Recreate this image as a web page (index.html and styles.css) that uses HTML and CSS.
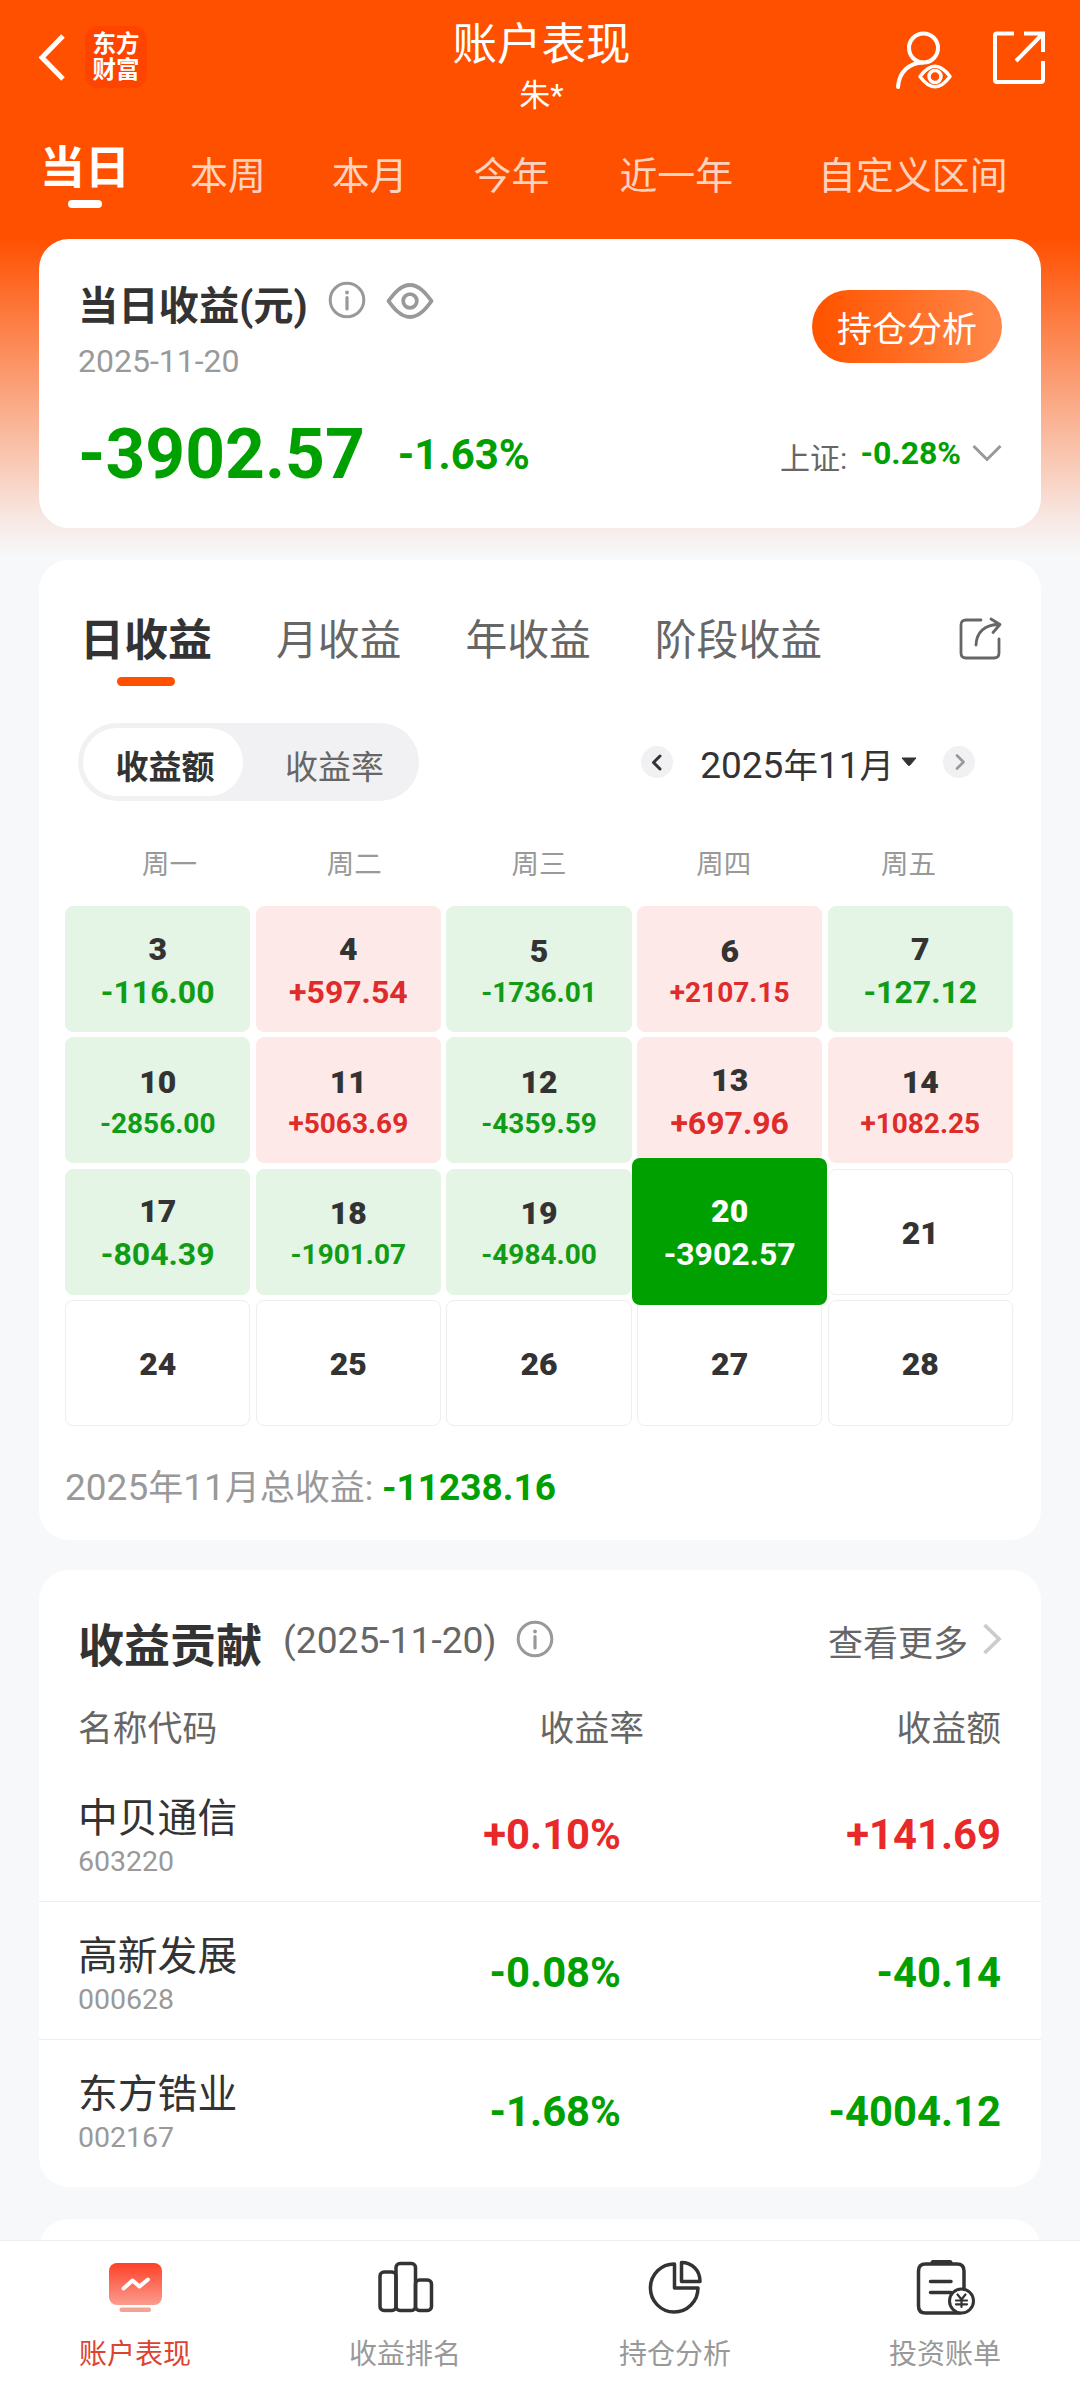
FILE: index.html
```html
<!DOCTYPE html>
<html lang="zh-CN">
<head>
    <meta charset="UTF-8">
    <meta name="viewport" content="width=device-width, initial-scale=1.0">
    <title>账户表现</title>
    <link rel="stylesheet" href="styles.css">
</head>
<body>
<header class="topbar">
    <div class="topbar-left">
        <svg class="back" width="30" height="50" viewBox="0 0 30 50"><path d="M26 4L5 25.500L26 47" fill="none" stroke="#fff" stroke-width="5"/></svg>
        <div class="logo"><span>东方</span><span>财富</span></div>
    </div>
    <div class="topbar-title">
        <h1>账户表现</h1>
        <p>朱*</p>
    </div>
    <div class="topbar-right">
        <svg width="60" height="62" viewBox="0 0 60 62" fill="none" stroke="#fff" stroke-width="4" stroke-linecap="round">
            <circle cx="29.500" cy="18" r="14.500"/>
            <path d="M4 57C5 42 15 33 29 32.500"/>
            <path d="M26 46.500Q41 26 56 46.500Q41 67 26 46.500Z" stroke-width="3.500" stroke-linejoin="round"/>
            <circle cx="41" cy="46.500" r="6" stroke-width="3.500"/>
        </svg>
        <svg width="54" height="54" viewBox="0 0 54 54" fill="none" stroke="#fff" stroke-width="4">
            <path d="M22 3.500H5Q3 3.500 3 5.500V50Q3 52 5 52H49Q51 52 51 50V31"/>
            <path d="M32 3.500H51V22M51 3.500L24 31"/>
        </svg>
    </div>
</header>

<nav class="periods">
    <a class="active">当日</a>
    <a>本周</a>
    <a>本月</a>
    <a>今年</a>
    <a>近一年</a>
    <a>自定义区间</a>
</nav>

<main>
    <section class="card today">
        <div class="today-head">
            <div>
                <div class="today-title">
                    <h2>当日收益(元)</h2>
                    <svg class="info" width="38" height="38" viewBox="0 0 38 38"><circle cx="19" cy="19" r="16.800" fill="none" stroke="#999" stroke-width="3"/><circle cx="19" cy="11.500" r="1.900" fill="#999"/><path d="M19 16.500V28" stroke="#999" stroke-width="3.200" stroke-linecap="round"/></svg>
                    <svg class="eye" width="48" height="38" viewBox="0 0 48 38" fill="none" stroke="#999" stroke-width="3.800"><path d="M2.500 19C7 13 14 3 24 3S41 13 45.500 19C41 25 34 35 24 35S7 25 2.500 19Z" stroke-linejoin="round"/><circle cx="24" cy="19" r="6.800"/></svg>
                </div>
                <p class="today-date">2025-11-20</p>
            </div>
            <button class="analyse">持仓分析</button>
        </div>
        <div class="today-value">
            <strong class="amount down">-3902.57</strong>
            <strong class="rate down">-1.63%</strong>
            <span class="index-name">上证:</span>
            <strong class="index-rate down">-0.28%</strong>
            <svg width="30" height="18" viewBox="0 0 30 18"><path d="M1.500 1L15 14.500L28.500 1" fill="none" stroke="#999" stroke-width="3"/></svg>
        </div>
    </section>

    <section class="card calendar">
        <div class="tabs">
            <a class="active">日收益</a>
            <a>月收益</a>
            <a>年收益</a>
            <a>阶段收益</a>
            <svg width="44" height="44" viewBox="0 0 44 44" fill="none" stroke="#666" stroke-width="2.800" stroke-linecap="round" stroke-linejoin="round">
                <path d="M23 3H8Q3 3 3 8V36Q3 41 8 41H36Q41 41 41 36V22"/>
                <path d="M18 28C18.500 15 27 7.500 41 7.500M33 2L42 7.500L35 15.500"/>
            </svg>
        </div>

        <div class="filters">
            <div class="switch">
                <span class="on">收益额</span>
                <span>收益率</span>
            </div>
            <div class="month">
                <svg width="32" height="32" viewBox="0 0 32 32"><circle cx="16" cy="16" r="16" fill="#f1f1f3"/><path d="M19 10L12.500 16.500L19 23" fill="none" stroke="#333" stroke-width="3" stroke-linecap="round" stroke-linejoin="round"/></svg>
                <span class="month-text"><b>2025</b>年<b>11</b>月</span>
                <svg class="caret" width="16" height="10" viewBox="0 0 16 10"><path d="M1 1H15L8.800 8.200Q8 9 7.200 8.200Z" fill="#333" stroke="#333" stroke-linejoin="round"/></svg>
                <svg width="32" height="32" viewBox="0 0 32 32"><circle cx="16" cy="16" r="16" fill="#f1f1f3"/><path d="M14 9.500L20.500 16L14 22.500" fill="none" stroke="#999" stroke-width="2.600" stroke-linecap="round" stroke-linejoin="round"/></svg>
            </div>
        </div>

        <div class="weekdays">
            <span>周一</span><span>周二</span><span>周三</span><span>周四</span><span>周五</span>
        </div>

        <div class="days">
            <div class="day loss"><b>3</b><em>-116.00</em></div>
            <div class="day gain"><b>4</b><em>+597.54</em></div>
            <div class="day loss"><b>5</b><em class="small">-1736.01</em></div>
            <div class="day gain"><b>6</b><em class="small">+2107.15</em></div>
            <div class="day loss"><b>7</b><em>-127.12</em></div>

            <div class="day loss"><b>10</b><em class="small">-2856.00</em></div>
            <div class="day gain"><b>11</b><em class="small">+5063.69</em></div>
            <div class="day loss"><b>12</b><em class="small">-4359.59</em></div>
            <div class="day gain"><b>13</b><em>+697.96</em></div>
            <div class="day gain"><b>14</b><em class="small">+1082.25</em></div>

            <div class="day loss"><b>17</b><em>-804.39</em></div>
            <div class="day loss"><b>18</b><em class="small">-1901.07</em></div>
            <div class="day loss"><b>19</b><em class="small">-4984.00</em></div>
            <div class="day selected"><b>20</b><em>-3902.57</em></div>
            <div class="day"><b>21</b></div>

            <div class="day"><b>24</b></div>
            <div class="day"><b>25</b></div>
            <div class="day"><b>26</b></div>
            <div class="day"><b>27</b></div>
            <div class="day"><b>28</b></div>
        </div>

        <p class="total"><b>2025</b>年<b>11</b>月总收益: <strong class="down">-11238.16</strong></p>
    </section>

    <section class="card contribution">
        <div class="contribution-head">
            <h2>收益贡献</h2>
            <span class="date">(2025-11-20)</span>
            <svg class="info" width="38" height="38" viewBox="0 0 38 38"><circle cx="19" cy="19" r="16.800" fill="none" stroke="#999" stroke-width="3"/><circle cx="19" cy="11.500" r="1.900" fill="#999"/><path d="M19 16.500V28" stroke="#999" stroke-width="3.200" stroke-linecap="round"/></svg>
            <a class="more">查看更多</a>
            <svg class="arrow" width="20" height="32" viewBox="0 0 20 32"><path d="M2.500 2L17 16L2.500 30" fill="none" stroke="#ccc" stroke-width="3.800"/></svg>
        </div>
        <div class="row row-head">
            <span>名称代码</span>
            <span class="col-rate">收益率</span>
            <span>收益额</span>
        </div>
        <div class="row">
            <div class="stock"><span>中贝通信</span><small>603220</small></div>
            <strong class="up">+0.10%</strong>
            <strong class="up">+141.69</strong>
        </div>
        <div class="row">
            <div class="stock"><span>高新发展</span><small>000628</small></div>
            <strong class="down">-0.08%</strong>
            <strong class="down">-40.14</strong>
        </div>
        <div class="row">
            <div class="stock"><span>东方锆业</span><small>002167</small></div>
            <strong class="down">-1.68%</strong>
            <strong class="down">-4004.12</strong>
        </div>
    </section>

    <section class="card next"></section>
</main>

<nav class="bottom">
    <a class="active">
        <svg width="60" height="60" viewBox="0 0 60 60">
            <defs><linearGradient id="screen" x1="0" y1="0" x2="0" y2="1"><stop offset="0" stop-color="#ff4028"/><stop offset="1" stop-color="#fb9c8e"/></linearGradient></defs>
            <rect x="4" y="6" width="53" height="42" rx="8" fill="url(#screen)"/>
            <rect x="14.500" y="50.500" width="31.500" height="4.500" rx="2" fill="#f3a396"/>
            <path d="M18.500 31.500L27.500 23.500L34.500 29.500L43 22.500" fill="none" stroke="#fff" stroke-width="4" stroke-linecap="round" stroke-linejoin="round"/>
        </svg>
        <span>账户表现</span>
    </a>
    <a>
        <svg width="60" height="60" viewBox="0 0 60 60" fill="none" stroke="#333" stroke-width="3.500">
            <rect x="5" y="15" width="16" height="38.500" rx="4"/>
            <rect x="21" y="6.500" width="19.500" height="47" rx="4"/>
            <rect x="40.500" y="23" width="16" height="30.500" rx="4"/>
        </svg>
        <span>收益排名</span>
    </a>
    <a>
        <svg width="60" height="60" viewBox="0 0 60 60" fill="none" stroke="#333" stroke-width="3.500" stroke-linejoin="round">
            <path d="M29.500 7A23.800 24 0 1 0 53 31H29.500Z"/>
            <path d="M36.500 5.500V24.500H55C55 13 47 5.500 36.500 5.500Z"/>
        </svg>
        <span>持仓分析</span>
    </a>
    <a>
        <svg width="60" height="60" viewBox="0 0 60 60" fill="none" stroke="#333" stroke-width="3.500" stroke-linecap="round">
            <path d="M49 33V14Q49 7 42 7H10.500Q3.500 7 3.500 14V49Q3.500 56 10.500 56H45"/>
            <path d="M18 5.500H35" stroke-width="5"/>
            <path d="M15.500 24.500H36M15.500 35.500H36"/>
            <circle cx="46.500" cy="44" r="12" fill="#fff" stroke-width="3"/>
            <path d="M42.500 37.500L46.500 42.500L50.500 37.500M46.500 42.500V50M41 43.500H52M41 47.300H52" stroke-width="2.200"/>
        </svg>
        <span>投资账单</span>
    </a>
</nav>
</body>
</html>
```
FILE: styles.css
```css
* {
    box-sizing: border-box;
}
body {
    margin: 0;
    height: 2386px;
    overflow: hidden;
    font-family: Roboto, "Noto Sans CJK SC", sans-serif;
    color: #333;
    background: #f7f8fa linear-gradient(#ff5000 238px, #f7ebe8 525px, #f7f8fa 556px) no-repeat;
}
h1, h2, p {
    margin: 0;
    font-weight: 400;
}
svg {
    display: block;
    flex: none;
}
em {
    font-style: normal;
}
.down {
    color: #00a000;
}
.up {
    color: #e92929;
}

/* header */
.topbar {
    display: grid;
    grid-template-columns: 1fr auto 1fr;
    height: 128px;
    padding: 0 34px 0 37px;
    color: #fff;
}
.topbar-left {
    display: flex;
    align-items: flex-start;
    gap: 18px;
    padding-top: 26px;
}
.back {
    margin-top: 6px;
}
.logo {
    display: flex;
    flex-direction: column;
    justify-content: center;
    align-items: center;
    width: 62px;
    height: 62px;
    border-radius: 13px;
    background: #ff4400;
    font-size: 23.5px;
    font-weight: 700;
    line-height: 26px;
}
.topbar-title {
    padding-top: 14px;
    text-align: center;
}
.topbar-title h1 {
    font-size: 44.5px;
    line-height: 62px;
}
.topbar-title p {
    font-size: 31px;
    line-height: 40px;
}
.topbar-right {
    display: flex;
    justify-content: flex-end;
    gap: 38px;
    padding-top: 30px;
}
.periods {
    display: flex;
    align-items: flex-start;
    height: 111px;
    padding: 18px 0 0 40px;
    font-size: 37.9px;
    line-height: 60px;
    color: rgba(255, 255, 255, 0.76);
}
.periods a {
    margin: 0 0 0 66px;
}
.periods a:nth-child(2) {
    margin-left: 60px;
}
.periods a:nth-child(5) {
    margin-left: 70px;
}
.periods a:nth-child(6) {
    margin-left: 85px;
}
.periods .active {
    margin: -7px 0 0;
    font-size: 45px;
    font-weight: 700;
    color: #fff;
}
.periods .active::after {
    content: "";
    display: block;
    width: 34px;
    height: 8px;
    margin: 1px auto 0;
    border-radius: 4px;
    background: #fff;
}

main {
    display: flex;
    flex-direction: column;
    gap: 32px;
    padding: 0 39px;
}
.card {
    flex: none;
    border-radius: 30px;
    background: #fff;
}

/* today's profit */
.today {
    height: 289px;
    padding: 39px 39px 0;
}
.today-head {
    display: flex;
    justify-content: space-between;
    height: 126px;
}
.today-title {
    display: flex;
    align-items: center;
}
.today-title h2 {
    font-size: 40.300px;
    line-height: 58px;
    font-weight: 700;
}
.today-title .info {
    margin: -15px 20px 0 20px;
}
.today-title .eye {
    margin-top: -13px;
}
.today-date {
    font-size: 32px;
    line-height: 51px;
    color: #999;
}
.analyse {
    width: 190px;
    height: 73px;
    margin-top: 12px;
    padding: 9px 0 0;
    border: none;
    border-radius: 37px;
    background: linear-gradient(90deg, #ff5500 5%, #ff8648 95%);
    font: inherit;
    font-size: 35px;
    line-height: 60px;
    color: #fff;
}
.today-value {
    display: flex;
    align-items: center;
    height: 100px;
}
.amount {
    font-size: 69.500px;
}
.rate {
    margin: 0 auto 0 33px;
    font-size: 42px;
}
.index-name {
    margin: 3px 13px 0 0;
    font-size: 30px;
    color: #666;
}
.index-rate {
    margin: -2px 11px 0 0;
    font-size: 32px;
}

/* profit calendar */
.calendar {
    height: 980px;
    padding: 49px 26px 0;
}
.tabs {
    display: flex;
    padding: 0 13px 0 15px;
    font-size: 41.800px;
    line-height: 64px;
    color: #666;
}
.tabs a {
    margin-right: 64px;
}
.tabs .active {
    font-size: 44px;
    font-weight: 700;
    color: #333;
}
.tabs .active::after {
    content: "";
    display: block;
    width: 58px;
    height: 9px;
    margin: 4px auto 0;
    border-radius: 5px;
    background: #ff5000;
}
.tabs svg {
    margin: 8px 0 0 auto;
}
.filters {
    display: flex;
    justify-content: space-between;
    align-items: center;
    margin-top: 37px;
    padding: 0 40px 0 13px;
}
.switch {
    display: flex;
    width: 341px;
    height: 78px;
    padding: 5px;
    border-radius: 39px;
    background: #f1f1f3;
    font-size: 33px;
    line-height: 79px;
    color: #666;
}
.switch span {
    flex: 1;
    height: 68px;
    padding-left: 12px;
    text-align: center;
}
.switch .on {
    flex: none;
    width: 160px;
    padding-left: 4px;
    border-radius: 34px;
    background: #fff;
    font-weight: 700;
    color: #333;
}
.month {
    display: flex;
    align-items: center;
}
.month-text {
    margin: 8px 7px 0 27px;
    font-size: 34.500px;
    line-height: 50px;
}
.month-text b, .total b {
    font-size: 37px;
    font-weight: 400;
}
.caret {
    margin-right: 26px;
}
.weekdays {
    display: flex;
    margin: 40px 14px 0 12px;
    font-size: 27.500px;
    line-height: 48px;
    color: #999;
}
.weekdays span {
    flex: 1;
    text-align: center;
}
.days {
    display: grid;
    grid-template-columns: repeat(5, 1fr);
    grid-auto-rows: 126px;
    gap: 5.300px;
    margin: 17px 2px 0 0;
}
.day {
    display: flex;
    flex-direction: column;
    justify-content: center;
    padding-top: 3px;
    border: 1px solid #eee;
    border-radius: 8px;
    text-align: center;
    font-size: 32px;
    line-height: 43px;
    font-weight: 700;
}
.day .small {
    font-size: 28px;
    line-height: 39px;
}
.loss {
    border-color: #e4f4e5;
    background: #e4f4e5;
}
.gain {
    border-color: #fde9e8;
    background: #fde9e8;
}
.loss em {
    color: #109c14;
}
.gain em {
    color: #e02b2b;
}
/* the chosen day grows over its neighbours */
.selected {
    z-index: 1;
    margin: -10.500px -5px;
    border: none;
    background: #00a000;
    color: #fff;
}
.total {
    margin-top: 35px;
    font-size: 35px;
    line-height: 54px;
    color: #999;
}
.total strong {
    font-size: 37px;
}

/* contribution list */
.contribution {
    height: 617px;
    margin-top: -2px;
    padding-top: 38px;
}
.contribution-head {
    display: flex;
    align-items: center;
    height: 66px;
    padding: 0 39px;
}
.contribution-head h2 {
    font-size: 46px;
    line-height: 66px;
    font-weight: 700;
    padding-top: 10px;
}
.contribution-head .date {
    margin: -2px 20px 0 21px;
    font-size: 37.200px;
    color: #666;
}
.contribution-head .info {
    margin-top: -4px;
}
.more {
    margin: -1px 14px 0 auto;
    font-size: 35px;
    color: #666;
}
.arrow {
    margin-top: -4px;
}
.row {
    display: grid;
    grid-template-columns: 300px 243px 1fr;
    align-items: center;
    height: 138px;
    padding: 4px 40px 0 39px;
    border-bottom: 1px solid #eee;
    text-align: right;
    font-size: 41.800px;
}
.row:last-child {
    border-bottom: none;
}
.row-head {
    height: 90px;
    padding-top: 14px;
    border-bottom: none;
    font-size: 34.800px;
    color: #666;
}
.row-head span:first-child {
    text-align: left;
}
.row-head .col-rate {
    margin-right: -23px;
}
.stock {
    padding-top: 5px;
    text-align: left;
}
.stock span {
    display: block;
    font-size: 39.800px;
    line-height: 48px;
}
.stock small {
    display: block;
    font-size: 28.500px;
    line-height: 37px;
    color: #999;
}
.next {
    height: 200px;
}

/* bottom navigation */
.bottom {
    position: fixed;
    left: 0;
    right: 0;
    bottom: 0;
    z-index: 2;
    display: flex;
    height: 146px;
    border-top: 1px solid #eee;
    background: #fff;
}
.bottom a {
    display: flex;
    flex: 1;
    flex-direction: column;
    align-items: center;
    padding-top: 16px;
    font-size: 28px;
    line-height: 40px;
    color: #999;
}
.bottom span {
    margin-top: 18px;
}
.bottom .active {
    color: #dc4430;
}
```
